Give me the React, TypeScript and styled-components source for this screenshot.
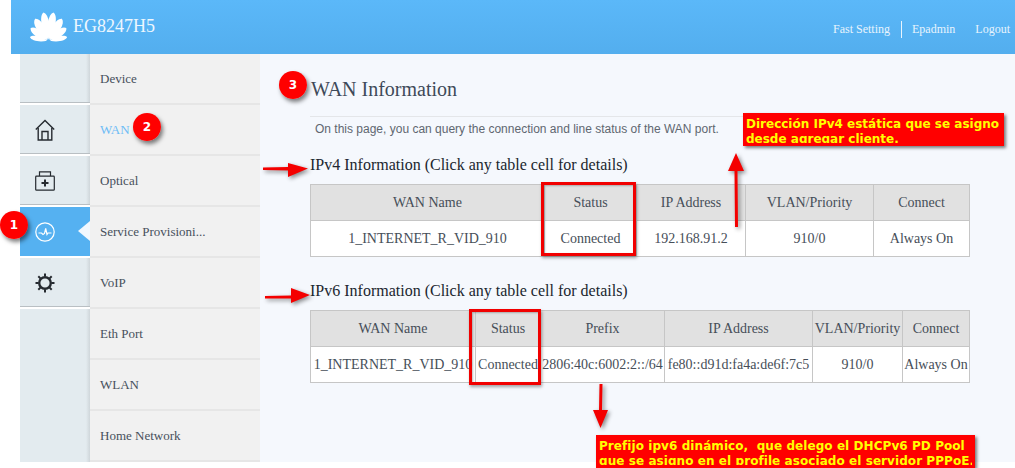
import React from 'react';
import styled, { createGlobalStyle } from 'styled-components';

const serif = '"Liberation Serif", "Times New Roman", serif';
const sans = '"Liberation Sans", Arial, sans-serif';
const dejavu = '"DejaVu Sans", Verdana, sans-serif';

const GlobalStyle = createGlobalStyle`
    html, body {
        margin: 0;
        padding: 0;
        background: #ffffff;
    }
    * {
        box-sizing: border-box;
    }
`;

const Page = styled.div`
    position: relative;
    width: 1015px;
    height: 468px;
    overflow: hidden;
    background: #ffffff;
    font-family: ${serif};
`;

const Header = styled.header`
    height: 54px;
    margin-left: 11px;
    padding: 0 5px 0 19px;
    display: flex;
    justify-content: space-between;
    background: linear-gradient(180deg, #5bb8f9 0%, #53aeee 100%);
    color: #ffffff;
`;

const Brand = styled.div`
    display: flex;
    align-items: flex-start;
    gap: 3px;
    padding-top: 12px;
    font-size: 18px;
    line-height: 29px;
    color: #eef7fe;
`;

const TopNav = styled.nav`
    display: flex;
    align-items: center;
    height: 17px;
    margin-top: 21px;
    font-size: 12px;
    color: #e8f4fd;
`;

const TopLink = styled.span<{ $divider?: boolean; $gap: number }>`
    margin-left: ${(p) => p.$gap}px;
    line-height: 17px;
    ${(p) => p.$divider && 'padding-left: 10px; border-left: 1px solid #e8f4fd;'}
`;

const Body = styled.div`
    display: flex;
    height: 408px;
    margin-left: 20px;
`;

const Rail = styled.div`
    width: 70px;
    flex: none;
    background: linear-gradient(90deg, #e3ebef 0, #e3ebef 66px, #cfd6da 70px);
`;

const RailItem = styled.div<{ $active?: boolean }>`
    position: relative;
    height: 51px;
    display: flex;
    align-items: center;
    padding-left: 15px;
    border-bottom: 2px solid #ffffff;
    box-shadow: inset 0 -1px 0 #b9bfc3;
    ${(p) => p.$active && 'background: #55b1f1; box-shadow: none; color: #ffffff;'}
`;

const Notch = styled.span`
    position: absolute;
    right: 0;
    top: 14px;
    width: 0;
    height: 0;
    border-top: 10px solid transparent;
    border-bottom: 10px solid transparent;
    border-right: 12px solid #f1f8fe;
`;

const SubNav = styled.div`
    width: 170px;
    flex: none;
    background: #f1f1f1;
`;

const SubItem = styled.div<{ $active?: boolean }>`
    height: 51px;
    padding: 0 0 0 10px;
    display: flex;
    align-items: center;
    border-bottom: 2px solid #e6e6e6;
    font-size: 13px;
    color: ${(p) => (p.$active ? '#6dbcf6' : '#47505c')};
`;

const Main = styled.main`
    flex: 1;
    padding: 19px 45px 0 50px;
    background: #f5f8fd;
`;

const Title = styled.h1`
    margin: 0 0 0 1px;
    height: 32px;
    font-size: 20px;
    font-weight: normal;
    line-height: 32px;
    color: #3e4a59;
`;

const Intro = styled.p`
    margin: 11px 0 0;
    padding: 5px 5px 0;
    height: 39px;
    border-top: 1px solid #e4e6e9;
    font-family: ${sans};
    font-size: 12px;
    line-height: 14px;
    color: #5f6770;
`;

const SectionTitle = styled.h2<{ $top: number }>`
    margin: ${(p) => p.$top}px 0 0;
    height: 19px;
    font-size: 16px;
    font-weight: normal;
    line-height: 19px;
    color: #20262e;
`;

const Grid = styled.table`
    width: 659px;
    margin-top: 10px;
    table-layout: fixed;
    border-collapse: collapse;
    font-size: 14px;
    color: #464e58;
    text-align: center;
`;

const Col = styled.col<{ $w: number }>`
    width: ${(p) => p.$w}px;
`;

const HeadCell = styled.th`
    height: 36px;
    padding: 0;
    background: #e1e1e1;
    border: 1px solid #c6c6c6;
    font-weight: normal;
    white-space: nowrap;
`;

const Cell = styled.td`
    height: 36px;
    padding: 0;
    background: #ffffff;
    border: 1px solid #c6c6c6;
    white-space: nowrap;
`;

const Badge = styled.span<{ $x: number; $y: number }>`
    position: absolute;
    left: ${(p) => p.$x - 14}px;
    top: ${(p) => p.$y - 14}px;
    width: 28px;
    height: 28px;
    display: flex;
    align-items: center;
    justify-content: center;
    border-radius: 50%;
    background: radial-gradient(circle at 50% 45%, #ff0000 70%, #e60000 100%);
    box-shadow: 2px 3px 4px rgba(0, 0, 0, 0.5);
    font-family: ${dejavu};
    font-size: 12px;
    font-weight: bold;
    color: #ffffff;
`;

const Marker = styled.div<{ $x: number; $y: number; $w: number; $h: number }>`
    position: absolute;
    left: ${(p) => p.$x}px;
    top: ${(p) => p.$y}px;
    width: ${(p) => p.$w}px;
    height: ${(p) => p.$h}px;
    border: 3px solid #f10000;
    box-shadow: 1px 2px 3px rgba(0, 0, 0, 0.35), inset 1px 1px 2px rgba(0, 0, 0, 0.25);
`;

const Callout = styled.div<{ $x: number; $y: number; $w: number; $h: number }>`
    position: absolute;
    left: ${(p) => p.$x}px;
    top: ${(p) => p.$y}px;
    width: ${(p) => p.$w}px;
    height: ${(p) => p.$h}px;
    padding: 4px 3px 0;
    background: #ff0000;
    box-shadow: 2px 2px 3px rgba(0, 0, 0, 0.5);
`;

// the second line loses its descenders in the reference, so the text is clipped short of the box
const CalloutText = styled.div<{ $track: number }>`
    height: 26px;
    overflow: hidden;
    font-family: ${dejavu};
    font-size: 12px;
    font-weight: bold;
    line-height: 15px;
    letter-spacing: ${(p) => p.$track}px;
    color: #ffff00;
    white-space: pre;
`;

const ArrowLayer = styled.svg`
    position: absolute;
    left: 0;
    top: 0;
    filter: drop-shadow(2px 2px 2px rgba(0, 0, 0, 0.45));
    pointer-events: none;
`;

const LineIcon = styled.svg`
    display: block;
    fill: none;
    stroke: #262b30;
`;

const menu = ['Device', 'WAN', 'Optical', 'Service Provisioni...', 'VoIP', 'Eth Port', 'WLAN', 'Home Network'];

const ipv4 = {
    widths: [234, 92, 109, 128, 96],
    head: ['WAN Name', 'Status', 'IP Address', 'VLAN/Priority', 'Connect'],
    row: ['1_INTERNET_R_VID_910', 'Connected', '192.168.91.2', '910/0', 'Always On'],
};

const ipv6 = {
    widths: [165, 65, 124, 148, 90, 67],
    head: ['WAN Name', 'Status', 'Prefix', 'IP Address', 'VLAN/Priority', 'Connect'],
    row: ['1_INTERNET_R_VID_910', 'Connected', '2806:40c:6002:2::/64', 'fe80::d91d:fa4a:de6f:7c5', '910/0', 'Always On'],
};

const petals = [
    { angle: -78, len: 19, w: 4 },
    { angle: -54, len: 22, w: 5.5 },
    { angle: -31, len: 26, w: 6.5 },
    { angle: -10, len: 29, w: 6 },
    { angle: 10, len: 29, w: 6 },
    { angle: 31, len: 26, w: 6.5 },
    { angle: 54, len: 22, w: 5.5 },
    { angle: 78, len: 19, w: 4 },
];

const Logo = () => (
    <svg width="40" height="30" viewBox="0 0 40 30" fill="#ffffff">
        {petals.map((p) => (
            <path
                key={p.angle}
                transform={`translate(18.5 29) rotate(${p.angle})`}
                d={`M0 -1.5C${-p.w * 0.9} ${-p.len * 0.45} ${-p.w * 0.8} ${-p.len * 0.92} 0 ${-p.len}C${p.w * 0.8} ${-p.len * 0.92} ${p.w * 0.9} ${-p.len * 0.45} 0 -1.5Z`}
            />
        ))}
    </svg>
);

const HomeIcon = () => (
    <LineIcon width="20" height="22" viewBox="0 0 20 22" strokeWidth="1.4">
        <path d="M0.8 10.5 10 1.5l9.2 9" />
        <path d="M3.2 9v12h13.6V9" />
        <path d="M7 21v-8.5h6V21" />
    </LineIcon>
);

const KitIcon = () => (
    <LineIcon width="20" height="20" viewBox="0 0 20 20" strokeWidth="1.2">
        <rect x="0.7" y="5.2" width="18.6" height="14" rx="0.8" />
        <path d="M4.5 5V0.8h11V5" />
        <path d="M10 8.5v7M6.5 12h7" strokeWidth="2" />
    </LineIcon>
);

const PulseIcon = () => (
    <svg width="20" height="20" viewBox="0 0 20 20" fill="none" stroke="#ffffff">
        <circle cx="10" cy="10" r="9.2" strokeWidth="1.2" />
        <path d="M3.5 11h3l1.5 1.5 1.5-1 1.2-5 1.3 6 1-1.5h3.5" strokeWidth="1.2" />
    </svg>
);

const GearIcon = () => (
    <LineIcon width="20" height="20" viewBox="0 0 20 20" strokeWidth="2.4">
        <circle cx="10" cy="10" r="5.8" />
        <path
            d="M10 0.5v3M10 16.5v3M0.5 10h3M16.5 10h3M3.3 3.3l2.1 2.1M14.6 14.6l2.1 2.1M3.3 16.7l2.1-2.1M14.6 5.4l2.1-2.1"
            strokeWidth="2"
        />
    </LineIcon>
);

const railIcons = [null, <HomeIcon key="home" />, <KitIcon key="kit" />, <PulseIcon key="pulse" />, <GearIcon key="gear" />];

const InfoTable = ({ data }: { data: typeof ipv4 }) => (
    <Grid>
        <colgroup>
            {data.widths.map((w, i) => (
                <Col key={i} $w={w} />
            ))}
        </colgroup>
        <thead>
            <tr>
                {data.head.map((h) => (
                    <HeadCell key={h}>{h}</HeadCell>
                ))}
            </tr>
        </thead>
        <tbody>
            <tr>
                {data.row.map((c) => (
                    <Cell key={c}>{c}</Cell>
                ))}
            </tr>
        </tbody>
    </Grid>
);

export default function App() {
    return (
        <Page>
            <GlobalStyle />
            <Header>
                <Brand>
                    <Logo />
                    EG8247H5
                </Brand>
                <TopNav>
                    <TopLink $gap={0}>Fast Setting</TopLink>
                    <TopLink $gap={11} $divider>
                        Epadmin
                    </TopLink>
                    <TopLink $gap={20}>Logout</TopLink>
                </TopNav>
            </Header>
            <Body>
                <Rail>
                    {railIcons.map((icon, i) => (
                        <RailItem key={i} $active={i === 3}>
                            {icon}
                            {i === 3 && <Notch />}
                        </RailItem>
                    ))}
                </Rail>
                <SubNav>
                    {menu.map((m) => (
                        <SubItem key={m} $active={m === 'WAN'}>
                            {m}
                        </SubItem>
                    ))}
                </SubNav>
                <Main>
                    <Title>WAN Information</Title>
                    <Intro>On this page, you can query the connection and line status of the WAN port.</Intro>
                    <SectionTitle $top={0}>IPv4 Information (Click any table cell for details)</SectionTitle>
                    <InfoTable data={ipv4} />
                    <SectionTitle $top={24}>IPv6 Information (Click any table cell for details)</SectionTitle>
                    <InfoTable data={ipv6} />
                </Main>
            </Body>

            <Marker $x={541} $y={182} $w={95} $h={74} />
            <Marker $x={469} $y={309} $w={72} $h={76} />

            <ArrowLayer width="1015" height="468" viewBox="0 0 1015 468" fill="#f40000">
                <polygon points="263,167.5 288,167 288,163 308,168.5 288,177 288,170.5 263,170" />
                <polygon points="265,296 291,295.5 291,288 310,295 291,303 291,298.5 265,298.5" />
                <polygon points="735,227 734.5,171 728,171 736,153 744,171 737.5,171 738,227" />
                <polygon points="599.5,384 602.5,384 602,410 608,410 600.5,428 593,410 599,410" />
            </ArrowLayer>

            <Badge $x={14} $y={225}>1</Badge>
            <Badge $x={147} $y={127}>2</Badge>
            <Badge $x={293} $y={85}>3</Badge>

            <Callout $x={743} $y={113} $w={261} $h={33}>
                <CalloutText $track={0}>{'Dirección IPv4 estática que se asigno\ndesde agregar cliente.'}</CalloutText>
            </Callout>
            <Callout $x={596} $y={435} $w={379} $h={33}>
                <CalloutText $track={0.07}>
                    {'Prefijo ipv6 dinámico,  que delego el DHCPv6 PD Pool\nque se asigno en el profile asociado el servidor PPPoE.'}
                </CalloutText>
            </Callout>
        </Page>
    );
}
